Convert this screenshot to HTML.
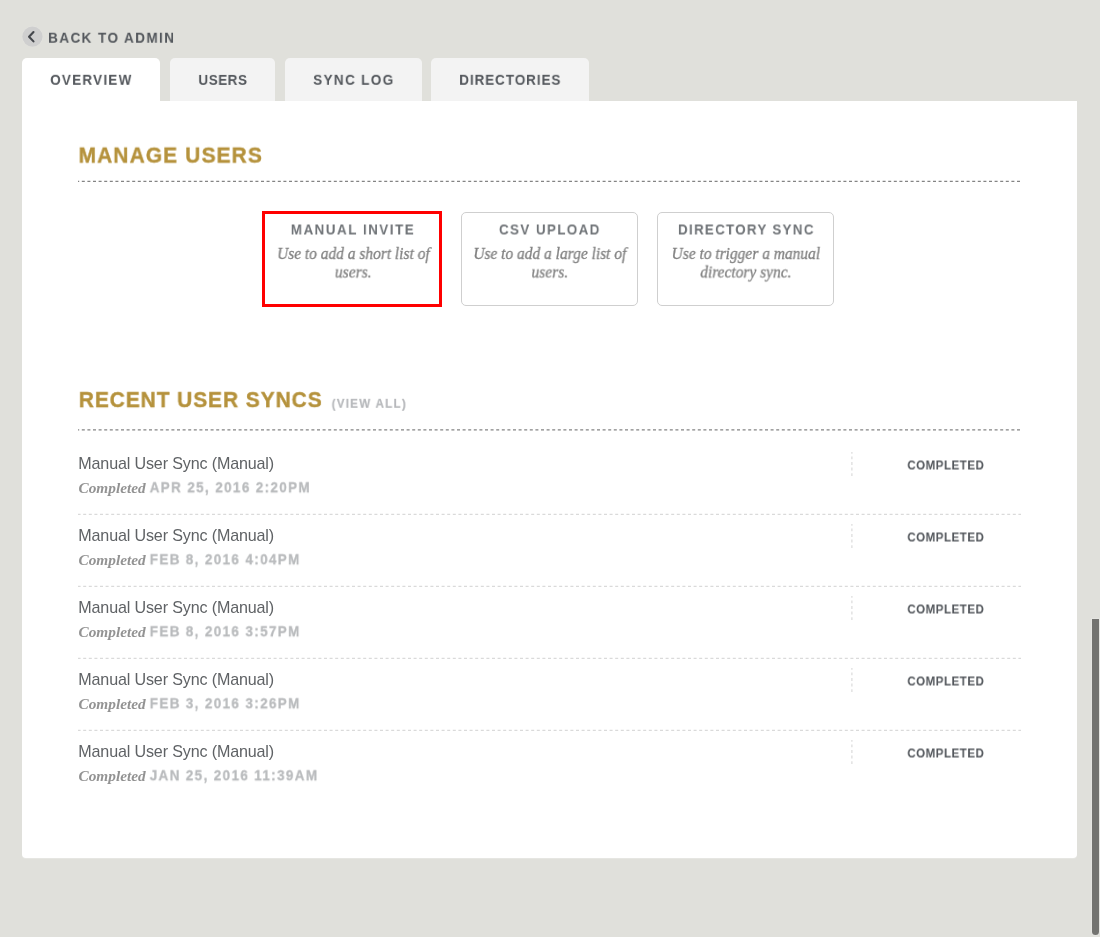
<!DOCTYPE html>
<html lang="en">
<head>
<meta charset="utf-8">
<title>Manage Users</title>
<style>
*{box-sizing:border-box;margin:0;padding:0}
html,body{width:1100px;height:937px;overflow:hidden;background:#e0e0db}
body{position:relative;font-family:"Liberation Sans",sans-serif;color:#55595e}
.k,.it,.rt,.ci{will-change:transform}
.k{position:absolute;white-space:nowrap;font-weight:bold;line-height:20px;transform-origin:0 50%;display:block}
.circ{position:absolute;left:20px;top:24px;width:25px;height:25px;display:block}
.tab{position:absolute;top:58px;height:43px;background:#f3f3f3;border-radius:5px 5px 0 0}
.tab.on{background:#fff}
.panel{position:absolute;left:22px;top:101px;width:1055px;height:757px;background:#fff;border-radius:0 0 4px 4px;box-shadow:0 1px 0 rgba(255,255,255,.2)}
.ln{position:absolute;left:78px;width:943px;height:5px;display:block;overflow:hidden}
.vr{position:absolute;left:850px;width:4px;height:26px;display:block;overflow:hidden}
.box{position:absolute;top:212px;width:177px;height:94px;border:1px solid #cfcfcf;border-radius:5px;background:#fff}
.red{position:absolute;left:262px;top:211px;width:180px;height:96px;border:3px solid #ff0000;background:#fff}
.it{position:absolute;white-space:nowrap;font-family:"Liberation Serif",serif;font-style:italic;font-size:16px;line-height:18.7px;color:#828282;text-align:center;width:177px;transform-origin:50% 50%;-webkit-text-stroke:0.3px #828282}
.rt{position:absolute;transform-origin:0 50%;white-space:nowrap;font-size:16.1px;line-height:20px;color:#5f6265;letter-spacing:-0.15px}
.ci{position:absolute;transform-origin:0 50%;white-space:nowrap;font-family:"Liberation Serif",serif;font-style:italic;font-weight:bold;font-size:15px;line-height:20px;color:#939393}
.sb{position:absolute;left:1092px;top:619px;width:7px;height:316px;border-radius:0 0 3.5px 3.5px;background:#737370;box-shadow:0 0 0 1px rgba(255,255,255,.18)}
</style>
</head>
<body>
<svg class="circ" width="25" height="25" viewBox="0 0 25 25"><circle cx="12.45" cy="12.5" r="10.6" fill="#ffffff" fill-opacity="0.12"/><circle cx="12.45" cy="12.6" r="10.15" fill="#cfcfcf"/><path d="M13.5 8 L9.05 12.7 L13.5 17.4" fill="none" stroke="#44474c" stroke-width="2.1" stroke-linecap="round" stroke-linejoin="round"/></svg>
<span class="k" style="left:48px;top:27px;font-size:15.3px;letter-spacing:1.65px;color:#53575c;transform:translate(0.1px,0.7px) scaleX(0.88)">BACK TO ADMIN</span>
<div class="tab on" style="left:22px;width:138px"></div>
<div class="tab " style="left:170px;width:105px"></div>
<div class="tab " style="left:285px;width:137px"></div>
<div class="tab " style="left:431px;width:158px"></div>
<span class="k" style="left:50px;top:69px;font-size:15.3px;letter-spacing:1.43px;color:#53575c;transform:translate(0.2px,0.8px) scaleX(0.88)">OVERVIEW</span>
<span class="k" style="left:198px;top:69px;font-size:15.3px;letter-spacing:0.6px;color:#53575c;transform:translate(0.4px,0.9px) scaleX(0.88)">USERS</span>
<span class="k" style="left:313px;top:69px;font-size:15.3px;letter-spacing:1.56px;color:#53575c;transform:translate(0.2px,0.8px) scaleX(0.88)">SYNC LOG</span>
<span class="k" style="left:459px;top:69px;font-size:15.3px;letter-spacing:1.08px;color:#53575c;transform:translate(0.2px,0.8px) scaleX(0.88)">DIRECTORIES</span>
<div class="panel"></div>
<span class="k" style="-webkit-text-stroke:0.4px #b5923c;left:78px;top:145px;font-size:22px;letter-spacing:1.2px;color:#b5923c;transform:translate(0.6px,0.6px) scaleX(0.95)">MANAGE USERS</span>
<svg class="ln" style="top:179px" width="943" height="5" viewBox="0 0 943 5"><line x1="0" y1="2.35" x2="943" y2="2.35" stroke="#848484" stroke-width="1.25" stroke-dasharray="3 2.6" stroke-dashoffset="1.8"/></svg>
<div class="box" style="left:264.5px"></div>
<div class="box" style="left:461px"></div>
<div class="box" style="left:657px"></div>
<div class="red"></div>
<span class="k" style="left:290px;top:219px;font-size:15.2px;letter-spacing:1.74px;color:#6f7377;transform:translate(0.8px,0.5px) scaleX(0.88)">MANUAL INVITE</span>
<span class="k" style="left:499px;top:219px;font-size:15.2px;letter-spacing:1.61px;color:#6f7377;transform:translate(0px,0.5px) scaleX(0.88)">CSV UPLOAD</span>
<span class="k" style="left:678px;top:219px;font-size:15.2px;letter-spacing:1.47px;color:#6f7377;transform:translate(0px,0.5px) scaleX(0.88)">DIRECTORY SYNC</span>
<div class="it" style="left:264px;top:245px;transform:translate(0.8px,0px) scaleX(0.965);">Use to add a short list of</div>
<div class="it" style="left:264px;top:263px;transform:translate(0.8px,0.5px) scaleX(0.965);">users.</div>
<div class="it" style="left:461px;top:245px;transform:translate(0.3px,0px) scaleX(0.965);">Use to add a large list of</div>
<div class="it" style="left:461px;top:263px;transform:translate(0.3px,0.5px) scaleX(0.965);">users.</div>
<div class="it" style="left:657px;top:245px;transform:translate(0.3px,0px) scaleX(0.965);">Use to trigger a manual</div>
<div class="it" style="left:657px;top:263px;transform:translate(0.3px,0.5px) scaleX(0.965);">directory sync.</div>
<span class="k" style="-webkit-text-stroke:0.4px #b5923c;left:78px;top:390px;font-size:22px;letter-spacing:1.0px;color:#b5923c;transform:translate(0.8px,0.1px) scaleX(0.95)">RECENT USER SYNCS</span>
<span class="k" style="-webkit-text-stroke:0.2px #b6b8bb;left:331px;top:393px;font-size:13.2px;letter-spacing:1.42px;color:#b6b8bb;transform:translate(0.7px,0.8px) scaleX(0.88)">(VIEW ALL)</span>
<svg class="ln" style="top:427px" width="943" height="5" viewBox="0 0 943 5"><line x1="0" y1="2.8" x2="943" y2="2.8" stroke="#848484" stroke-width="1.25" stroke-dasharray="3 2.6" stroke-dashoffset="1.8"/></svg>
<div class="rt" style="left:78px;top:453px;transform:translate(0.3px,0.3px) scaleX(1);">Manual User Sync (Manual)</div>
<div class="ci" style="left:78px;top:477px;transform:translate(0.5px,0.8px) scaleX(1.02);">Completed</div>
<span class="k" style="-webkit-text-stroke:0.3px #b9bbbd;left:149px;top:477px;font-size:15.3px;letter-spacing:1.55px;color:#b9bbbd;transform:translate(0.7px,0.3px) scaleX(0.88)">APR 25, 2016 2:20PM</span>
<svg class="vr" style="top:452.2px" width="4" height="26" viewBox="0 0 4 26"><line x1="1.9" y1="0" x2="1.9" y2="26" stroke="#d8d8d8" stroke-width="1.1" stroke-dasharray="2.9 2.7" stroke-dashoffset="1.2"/></svg>
<span class="k" style="left:907px;top:455px;font-size:13.2px;letter-spacing:0.53px;color:#53575c;transform:translate(0.3px,0.5px) scaleX(0.88)">COMPLETED</span>
<svg class="ln" style="top:512px" width="943" height="5" viewBox="0 0 943 5"><line x1="0" y1="2.3" x2="943" y2="2.3" stroke="#dadada" stroke-width="1.25" stroke-dasharray="3 2.6" stroke-dashoffset="0.4"/></svg>
<div class="rt" style="left:78px;top:525px;transform:translate(0.3px,0.3px) scaleX(1);">Manual User Sync (Manual)</div>
<div class="ci" style="left:78px;top:549px;transform:translate(0.5px,0.8px) scaleX(1.02);">Completed</div>
<span class="k" style="-webkit-text-stroke:0.3px #b9bbbd;left:149px;top:549px;font-size:15.3px;letter-spacing:1.55px;color:#b9bbbd;transform:translate(0.7px,0.3px) scaleX(0.88)">FEB 8, 2016 4:04PM</span>
<svg class="vr" style="top:524.2px" width="4" height="26" viewBox="0 0 4 26"><line x1="1.9" y1="0" x2="1.9" y2="26" stroke="#d8d8d8" stroke-width="1.1" stroke-dasharray="2.9 2.7" stroke-dashoffset="1.2"/></svg>
<span class="k" style="left:907px;top:527px;font-size:13.2px;letter-spacing:0.53px;color:#53575c;transform:translate(0.3px,0.5px) scaleX(0.88)">COMPLETED</span>
<svg class="ln" style="top:584px" width="943" height="5" viewBox="0 0 943 5"><line x1="0" y1="2.3" x2="943" y2="2.3" stroke="#dadada" stroke-width="1.25" stroke-dasharray="3 2.6" stroke-dashoffset="0.4"/></svg>
<div class="rt" style="left:78px;top:597px;transform:translate(0.3px,0.3px) scaleX(1);">Manual User Sync (Manual)</div>
<div class="ci" style="left:78px;top:621px;transform:translate(0.5px,0.8px) scaleX(1.02);">Completed</div>
<span class="k" style="-webkit-text-stroke:0.3px #b9bbbd;left:149px;top:621px;font-size:15.3px;letter-spacing:1.55px;color:#b9bbbd;transform:translate(0.7px,0.3px) scaleX(0.88)">FEB 8, 2016 3:57PM</span>
<svg class="vr" style="top:596.2px" width="4" height="26" viewBox="0 0 4 26"><line x1="1.9" y1="0" x2="1.9" y2="26" stroke="#d8d8d8" stroke-width="1.1" stroke-dasharray="2.9 2.7" stroke-dashoffset="1.2"/></svg>
<span class="k" style="left:907px;top:599px;font-size:13.2px;letter-spacing:0.53px;color:#53575c;transform:translate(0.3px,0.5px) scaleX(0.88)">COMPLETED</span>
<svg class="ln" style="top:656px" width="943" height="5" viewBox="0 0 943 5"><line x1="0" y1="2.3" x2="943" y2="2.3" stroke="#dadada" stroke-width="1.25" stroke-dasharray="3 2.6" stroke-dashoffset="0.4"/></svg>
<div class="rt" style="left:78px;top:669px;transform:translate(0.3px,0.3px) scaleX(1);">Manual User Sync (Manual)</div>
<div class="ci" style="left:78px;top:693px;transform:translate(0.5px,0.8px) scaleX(1.02);">Completed</div>
<span class="k" style="-webkit-text-stroke:0.3px #b9bbbd;left:149px;top:693px;font-size:15.3px;letter-spacing:1.55px;color:#b9bbbd;transform:translate(0.7px,0.3px) scaleX(0.88)">FEB 3, 2016 3:26PM</span>
<svg class="vr" style="top:668.2px" width="4" height="26" viewBox="0 0 4 26"><line x1="1.9" y1="0" x2="1.9" y2="26" stroke="#d8d8d8" stroke-width="1.1" stroke-dasharray="2.9 2.7" stroke-dashoffset="1.2"/></svg>
<span class="k" style="left:907px;top:671px;font-size:13.2px;letter-spacing:0.53px;color:#53575c;transform:translate(0.3px,0.5px) scaleX(0.88)">COMPLETED</span>
<svg class="ln" style="top:728px" width="943" height="5" viewBox="0 0 943 5"><line x1="0" y1="2.3" x2="943" y2="2.3" stroke="#dadada" stroke-width="1.25" stroke-dasharray="3 2.6" stroke-dashoffset="0.4"/></svg>
<div class="rt" style="left:78px;top:741px;transform:translate(0.3px,0.3px) scaleX(1);">Manual User Sync (Manual)</div>
<div class="ci" style="left:78px;top:765px;transform:translate(0.5px,0.8px) scaleX(1.02);">Completed</div>
<span class="k" style="-webkit-text-stroke:0.3px #b9bbbd;left:149px;top:765px;font-size:15.3px;letter-spacing:1.55px;color:#b9bbbd;transform:translate(0.7px,0.3px) scaleX(0.88)">JAN 25, 2016 11:39AM</span>
<svg class="vr" style="top:740.2px" width="4" height="26" viewBox="0 0 4 26"><line x1="1.9" y1="0" x2="1.9" y2="26" stroke="#d8d8d8" stroke-width="1.1" stroke-dasharray="2.9 2.7" stroke-dashoffset="1.2"/></svg>
<span class="k" style="left:907px;top:743px;font-size:13.2px;letter-spacing:0.53px;color:#53575c;transform:translate(0.3px,0.5px) scaleX(0.88)">COMPLETED</span>
<div class="sb"></div>
</body>
</html>
